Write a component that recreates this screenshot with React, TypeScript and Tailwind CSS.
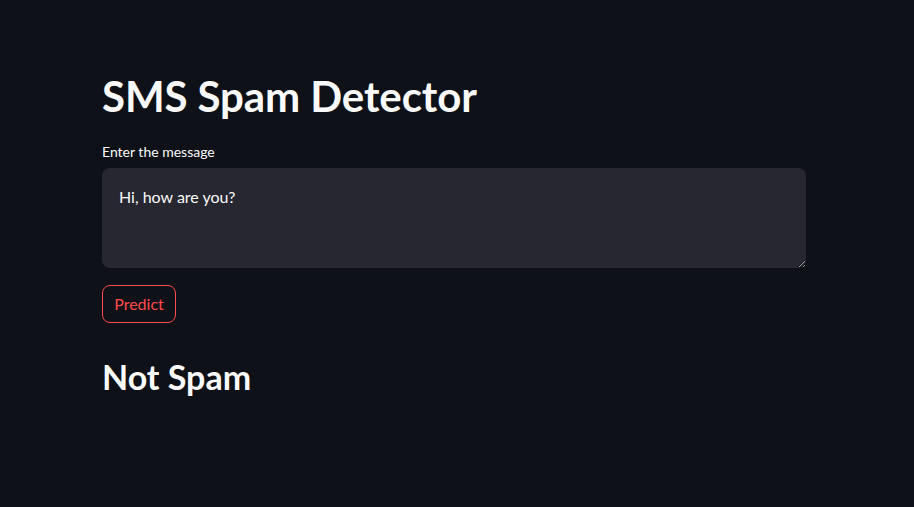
export default function App() {
  return (
    <div className="min-h-screen w-full bg-[#0e1117] text-[#fafafa] font-['Lato','Noto_Sans',sans-serif]">
      <div className="ml-[102px] w-[704px] pt-[67px]">
        <h1 className="text-[42px] font-bold leading-[1.2] py-[4px] tracking-[-0.1px]">SMS Spam Detector</h1>
        <label className="mt-[17px] block text-[14px] leading-[20px] text-[#fafafa]">Enter the message</label>
        <textarea
          readOnly
          defaultValue="Hi, how are you?"
          className="mt-[6px] block h-[100px] w-full resize-y rounded-[8px] bg-[#262730] px-[17px] py-[18px] text-[16px] leading-[22px] text-[#fafafa] outline-none [color-scheme:dark]"
        />
        <button className="mt-[17px] h-[38px] w-[74px] rounded-[8px] border border-[#ff4b4b] text-[16px] font-normal text-[#ff4b4b]">
          Predict
        </button>
        <h2 className="mt-[34px] text-[34px] font-bold leading-[1.2]">Not Spam</h2>
      </div>
    </div>
  );
}
